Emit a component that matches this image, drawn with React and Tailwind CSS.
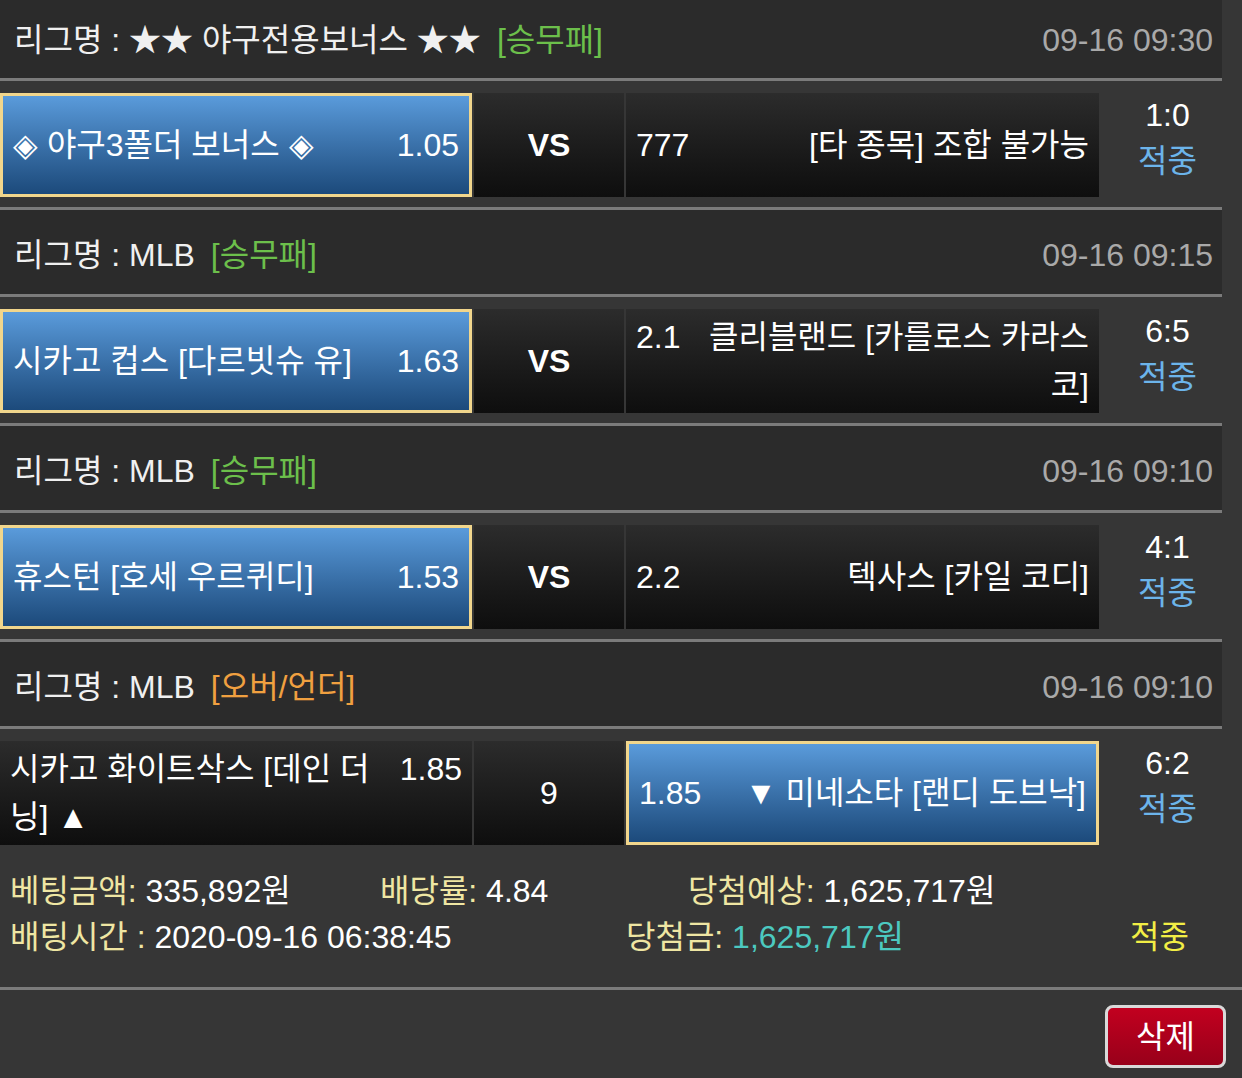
import React from "react";

const matches = [
    {
        league: "★★ 야구전용보너스 ★★",
        type: "[승무패]",
        typeColor: "text-[#6cbf4b]",
        time: "09-16 09:30",
        home: { name: ["◈ 야구3폴더 보너스 ◈"], odds: "1.05", picked: true },
        mid: "VS",
        away: { name: ["[타 종목] 조합 불가능"], odds: "777" },
        score: "1:0",
        first: true,
    },
    {
        league: "MLB",
        type: "[승무패]",
        typeColor: "text-[#6cbf4b]",
        time: "09-16 09:15",
        home: { name: ["시카고 컵스 [다르빗슈 유]"], odds: "1.63", picked: true },
        mid: "VS",
        away: { name: ["클리블랜드 [카를로스 카라스", "코]"], odds: "2.1" },
        score: "6:5",
    },
    {
        league: "MLB",
        type: "[승무패]",
        typeColor: "text-[#6cbf4b]",
        time: "09-16 09:10",
        home: { name: ["휴스턴 [호세 우르퀴디]"], odds: "1.53", picked: true },
        mid: "VS",
        away: { name: ["텍사스 [카일 코디]"], odds: "2.2" },
        score: "4:1",
    },
    {
        league: "MLB",
        type: "[오버/언더]",
        typeColor: "text-[#f0a040]",
        time: "09-16 09:10",
        home: { name: ["시카고 화이트삭스 [데인 더", "닝] ▲"], odds: "1.85" },
        mid: "9",
        away: { name: ["▼ 미네소타 [랜디 도브낙]"], odds: "1.85", picked: true },
        score: "6:2",
        last: true,
    },
];

function Cell({ picked, width, children }) {
    return (
        <div
            className={
                picked
                    ? `${width} flex items-center border-[3px] border-[#f1d68c] bg-gradient-to-b from-[#5a9bdb] to-[#1c4a7b] px-[10px]`
                    : `${width} flex items-center bg-gradient-to-b from-[#2c2c2c] to-[#0e0e0e] px-[10px]`
            }
        >
            {children}
        </div>
    );
}

function Match({ m }) {
    return (
        <div>
            <div
                className={`flex items-center justify-between border-b-[3px] border-[#7b7b7b] bg-[#2b2b2b] pl-[14px] pr-[9px] ${
                    m.first ? "h-[81px] pt-[2px]" : "h-[87px] pt-[5px]"
                }`}
            >
                <div className="text-[#f0f0f0]">
                    리그명 : {m.league}
                    <span className={`ml-4 ${m.typeColor}`}>{m.type}</span>
                </div>
                <div className="text-[#a9a9a9]">{m.time}</div>
            </div>

            <div
                className={`flex gap-[2px] pt-[12px] pb-[10px] ${
                    m.last ? "h-[126px]" : "h-[129px] border-b-[3px] border-[#7b7b7b]"
                }`}
            >
                <Cell picked={m.home.picked} width="w-[472px]">
                    <div className="flex w-full items-start justify-between">
                        <div>
                            {m.home.name.map((l, i) => (
                                <div key={i}>{l}</div>
                            ))}
                        </div>
                        <div>{m.home.odds}</div>
                    </div>
                </Cell>
                <div className="flex w-[150px] items-center justify-center bg-gradient-to-b from-[#2c2c2c] to-[#0e0e0e]">
                    <span className={m.mid === "VS" ? "font-bold" : ""}>{m.mid}</span>
                </div>
                <Cell picked={m.away.picked} width="w-[473px]">
                    <div className="flex w-full items-start justify-between">
                        <div>{m.away.odds}</div>
                        <div className="text-right">
                            {m.away.name.map((l, i) => (
                                <div key={i}>{l}</div>
                            ))}
                        </div>
                    </div>
                </Cell>
                <div className="flex flex-1 flex-col items-center justify-center pb-[14px] pl-[12px] leading-[46px]">
                    <div>{m.score}</div>
                    <div className="text-[#6cb4ea]">적중</div>
                </div>
            </div>
        </div>
    );
}

export default function App() {
    return (
        <div className="h-[1078px] w-[1242px] overflow-hidden bg-[#363636] font-['Liberation_Sans','Noto_Sans_CJK_KR',sans-serif] text-[32px] leading-[48px] text-white">
            <div className="w-[1222px]">
                {matches.map((m, i) => (
                    <Match key={i} m={m} />
                ))}
            </div>

            <div className="border-b-[3px] border-[#7b7b7b] pt-[13px] pb-[27px] pl-[10px] leading-[46px]">
                <div className="flex">
                    <span className="w-[370px]">
                        <span className="text-[#efe6a3]">베팅금액:</span> 335,892원
                    </span>
                    <span className="w-[308px]">
                        <span className="text-[#efe6a3]">배당률:</span> 4.84
                    </span>
                    <span>
                        <span className="text-[#efe6a3]">당첨예상:</span> 1,625,717원
                    </span>
                </div>
                <div className="flex">
                    <span className="w-[616px]">
                        <span className="text-[#efe6a3]">배팅시간 :</span> 2020-09-16 06:38:45
                    </span>
                    <span className="w-[504px]">
                        <span className="text-[#efe6a3]">당첨금:</span>{" "}
                        <span className="text-[#4cc9c0]">1,625,717원</span>
                    </span>
                    <span className="text-[#f2ee45]">적중</span>
                </div>
            </div>

            <div className="flex justify-end pt-[15px] pr-[16px]">
                <button
                    type="button"
                    className="flex h-[63px] w-[121px] items-center justify-center rounded-[8px] border-[3px] border-[#d9d9d9] bg-gradient-to-b from-[#c2001f] to-[#98001a] text-white"
                >
                    삭제
                </button>
            </div>
        </div>
    );
}
